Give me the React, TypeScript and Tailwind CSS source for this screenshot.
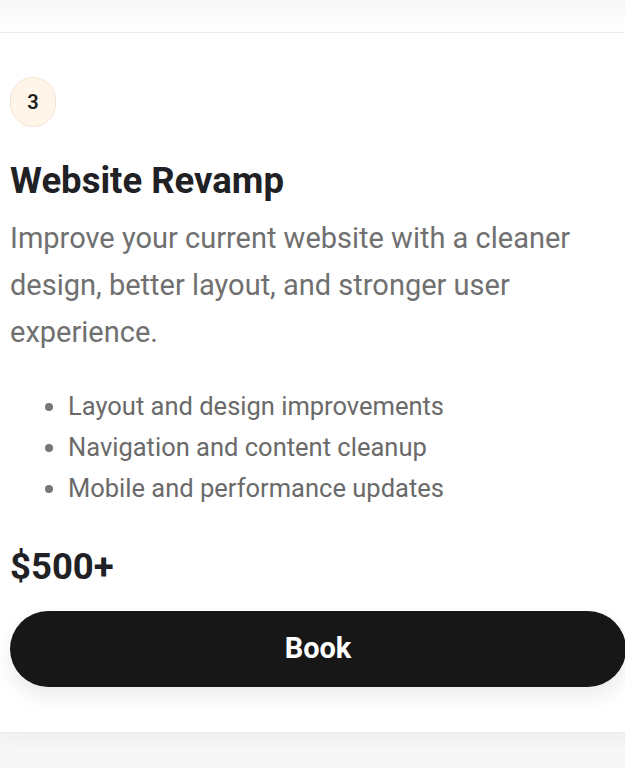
import React from "react";

const features = [
  "Layout and design improvements",
  "Navigation and content cleanup",
  "Mobile and performance updates",
];

export default function App() {
  return (
    <div
      className="w-full h-[768px] overflow-hidden bg-[#f7f7f7]"
      style={{ fontFamily: "Roboto, 'Noto Sans', sans-serif" }}
    >
      <div className="h-[33px] bg-gradient-to-b from-[#f8f8f8] to-white border-b border-[#ececec]" />

      <div className="w-[640px] bg-white border-b border-[#ececec] shadow-[0_8px_16px_rgba(0,0,0,0.035)] pl-[10px] pt-[44px] pb-[45px]">
        <div className="w-[46px] h-[50px] rounded-full bg-[#fff6e9] border border-[#f3e4d1] flex items-center justify-center text-[20px] font-semibold text-[#1c1c1c]">
          3
        </div>

        <h2 className="mt-[32px] text-[36.5px] leading-[44px] font-bold text-[#202124]">
          Website Revamp
        </h2>

        <p className="mt-[12px] w-[590px] text-[29px] leading-[47px] text-[#707070]">
          Improve your current website with a cleaner design, better layout, and stronger user experience.
        </p>

        <ul className="mt-[30px] pl-[58px] list-disc text-[25.5px] leading-[41px] text-[#6a6a6a] marker:text-[#777]">
          {features.map((f) => (
            <li key={f}>{f}</li>
          ))}
        </ul>

        <div className="mt-[36px] text-[36.5px] leading-[44px] font-bold text-[#202124]">$500+</div>

        <button className="mt-[22px] w-[616px] h-[76px] rounded-full bg-[#171717] text-white text-[29px] font-bold shadow-[0_10px_20px_rgba(0,0,0,0.08)]">
          Book
        </button>
      </div>
    </div>
  );
}
